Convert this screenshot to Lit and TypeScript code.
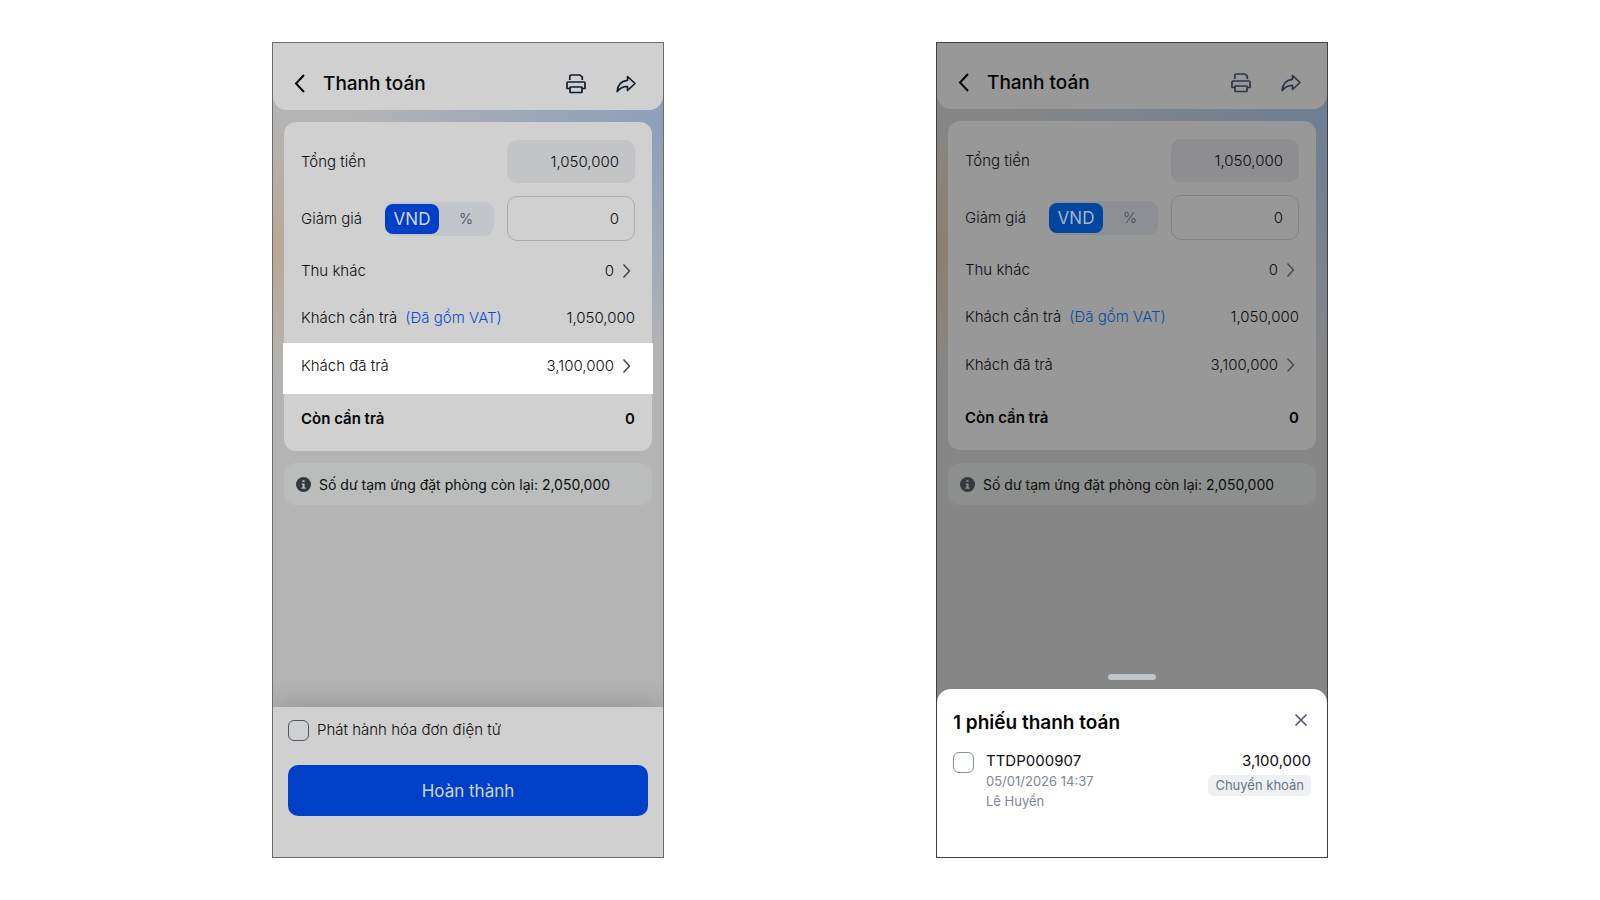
import { LitElement, html, css, svg } from "lit";
import { customElement, property } from "lit/decorators.js";

const backIcon = svg`<path d="M13 3 L5 11.500 L13 20" />`;
const chevronIcon = svg`<path d="M4.500 1.500 L10.500 8 L4.500 14.500" />`;

@customElement("payment-screen")
class PaymentScreen extends LitElement {
  @property({ type: Boolean, reflect: true }) sheet = false;

  static styles = css`
    :host {
      --surface: #d0d0d0;
      --back: #b4b4b4;
      --peach: #baa995;
      --sky: #8c9fbb;
      --field: #c2c4c6;
      --line: #a9adb4;
      --seg: #c2c5c9;
      --primary: #0040c8;
      --on-primary: #d0d6e4;
      --link: #0c4bd0;
      --note: #babdbc;
      --ink: #0c0d0e;
      --muted: #3c4658;
      --icon: #101c2e;
      --frame: #6c6c6c;
      display: flex;
      flex-direction: column;
      position: relative;
      overflow: hidden;
      box-sizing: border-box;
      border: 1px solid var(--frame);
      color: var(--ink);
      background:
        radial-gradient(ellipse 320px 240px at 100% 80px, var(--sky) 0, transparent 100%),
        radial-gradient(ellipse 200px 130px at 0 205px, var(--peach) 0, transparent 100%),
        var(--back);
    }
    :host([sheet]) {
      --surface: #989898;
      --back: #868686;
      --peach: #8c7f70;
      --sky: #6d7f94;
      --field: #8e8e90;
      --line: #7f8389;
      --seg: #8e8f92;
      --primary: #00469e;
      --on-primary: #a4b4c8;
      --link: #0a4c9c;
      --note: #8c8f8d;
      --muted: #454c58;
      --icon: #2c3644;
      --frame: #404040;
    }
    button, input { font: inherit; color: inherit; margin: 0; }
    button { border: 0; padding: 0; background: none; display: flex; align-items: center; }
    svg { display: block; fill: none; stroke: currentColor; stroke-width: 1.500; }
    h1, h2 { margin: 0; font-weight: 600; color: #050505; }
    h1 { font-size: 19px; line-height: 24px; font-weight: 500; flex: 1; }
    header {
      display: flex;
      align-items: center;
      height: 67px;
      box-sizing: border-box;
      padding: 14px 26px 0 18px;
      background: var(--surface);
      border-radius: 0 0 14px 14px;
    }
    :host([sheet]) header { height: 66px; padding: 13px 25px 0 18px; }
    .back { margin-right: 14px; color: #050505; }
    .back svg { stroke-width: 2; }
    .tool { margin-left: 28px; color: var(--icon); }
    .tool svg { stroke-width: 1.700; }
    .card {
      margin: 12px 11px 0;
      padding: 18px 17px 8px;
      background: var(--surface);
      border-radius: 12px;
    }
    .row {
      display: flex;
      align-items: center;
      height: 48px;
      font-size: 15px;
      font-weight: 300;
      line-height: 20px;
    }
    .row > :first-child { flex: 1; }
    .total-row { height: 43px; margin-bottom: 13px; }
    .discount-row { height: 45px; margin-bottom: 6px; }
    .due-row { height: 45px; margin-bottom: 3px; }
    .paid-row {
      height: 51px;
      box-sizing: border-box;
      margin: 0 -18px 1px;
      padding: 0 18px 6px;
    }
    :host(:not([sheet])) .paid-row { background: #fff; }
    .left-row { font-weight: 600; color: #050505; }
    .field {
      width: 128px;
      height: 100%;
      box-sizing: border-box;
      border: 1px solid var(--line);
      border-radius: 10px;
      padding: 0 15px;
      text-align: right;
      background: transparent;
    }
    .field:read-only { background: var(--field); border-color: var(--field); }
    .segment {
      display: flex;
      width: 109px;
      height: 34px;
      box-sizing: border-box;
      padding: 2px 0;
      margin-right: 13px;
      border-radius: 10px;
      background: var(--seg);
    }
    .segment button { justify-content: center; width: 54px; border-radius: 8px; color: var(--muted); }
    .segment .on { background: var(--primary); color: var(--on-primary); font-size: 17px; font-weight: 400; }
    .more { gap: 5px; padding-right: 2px; }
    .more svg { color: var(--muted); }
    .link { color: var(--link); text-decoration: none; margin-left: 4px; }
    .note {
      display: flex;
      align-items: center;
      gap: 8px;
      height: 42px;
      margin: 12px 11px 0;
      padding: 0 12px;
      border-radius: 12px;
      background: var(--note);
      font-size: 14px;
    }
    :host([sheet]) .note { margin-top: 13px; }
    .note svg { stroke: none; fill: #34393d; flex: none; }
    .note .glyph { fill: var(--note); }
    footer {
      margin-top: auto;
      height: 150px;
      box-sizing: border-box;
      padding: 12px 15px;
      background: var(--surface);
      box-shadow: 0 -6px 24px rgba(0, 0, 0, 0.16);
    }
    .check { display: flex; align-items: center; gap: 8px; font-size: 15px; font-weight: 300; line-height: 22px; }
    .box {
      appearance: none;
      flex: none;
      width: 21px;
      height: 21px;
      border: 1px solid #4c5869;
      border-radius: 6px;
    }
    .submit {
      width: 100%;
      height: 51px;
      margin-top: 24px;
      justify-content: center;
      border-radius: 10px;
      background: var(--primary);
      color: var(--on-primary);
      font-size: 17px;
    }
    .handle { width: 48px; height: 6px; border-radius: 3px; background: #c0c4cd; margin: auto auto 9px; }
    .sheet {
      height: 168px;
      box-sizing: border-box;
      padding: 20px 16px;
      border-radius: 14px 14px 0 0;
      background: #fff;
    }
    .sheet-head { display: flex; justify-content: space-between; height: 26px; }
    h2 { font-size: 19px; line-height: 28px; }
    .close { padding: 0 3px 4px 0; color: #465468; }
    .voucher { display: flex; margin-top: 16px; font-size: 15px; line-height: 20px; }
    .voucher .box { margin: 1px 12px 0 0; border-color: #8490a0; }
    .voucher label { flex: 1; }
    .meta { display: block; color: #7c8696; font-size: 13px; }
    .amount { display: flex; flex-direction: column; align-items: flex-end; gap: 4px; }
    .tag {
      padding: 0 7px;
      border-radius: 5px;
      background: #eff0f2;
      color: #67758a;
      font-size: 13px;
      line-height: 21px;
    }
  `;

  private chevron() {
    return html`<svg width="14" height="16" viewBox="0 0 14 16" aria-hidden="true">${chevronIcon}</svg>`;
  }

  render() {
    return html`
      <header>
        <button class="back" aria-label="Quay lại">
          <svg width="18" height="23" viewBox="0 0 18 23">${backIcon}</svg>
        </button>
        <h1>Thanh toán</h1>
        <button class="tool" aria-label="In">
          <svg width="22" height="22" viewBox="0 0 22 22" stroke-linejoin="round">
            <path d="M4.800 7 V3.500 Q4.800 2 6.300 2 H15 L17.300 4.200 V7" />
            <path d="M5 15.500 H2 V10 Q2 9 3 9 H19 Q20 9 20 10 V15.500 H17" />
            <rect x="5" y="14" width="12" height="5.500" rx="0.500" />
          </svg>
        </button>
        <button class="tool" aria-label="Chia sẻ">
          <svg width="22" height="22" viewBox="0 0 22 22" stroke-linejoin="round">
            <path d="M12.500 3.500 L20 10.500 L12.500 17.500 V13.500 C8 13.300 5 15 2.200 18.500 C2.500 12 6.500 7.800 12.500 7.300 Z" />
          </svg>
        </button>
      </header>
      <section class="card">
        <div class="row total-row">
          <label for="total">Tổng tiền</label>
          <input id="total" class="field" value="1,050,000" readonly />
        </div>
        <div class="row discount-row">
          <label for="discount">Giảm giá</label>
          <div class="segment">
            <button class="on" aria-pressed="true">VND</button>
            <button aria-pressed="false">%</button>
          </div>
          <input id="discount" class="field" value="0" />
        </div>
        <div class="row">
          <span>Thu khác</span>
          <button class="more">0 ${this.chevron()}</button>
        </div>
        <div class="row due-row">
          <span>Khách cần trả <a class="link" href="#vat">(Đã gồm VAT)</a></span>
          <span>1,050,000</span>
        </div>
        <div class="row paid-row">
          <span>Khách đã trả</span>
          <button class="more">3,100,000 ${this.chevron()}</button>
        </div>
        <div class="row left-row"><span>Còn cần trả</span><span>0</span></div>
      </section>
      <div class="note">
        <svg width="15" height="15" viewBox="0 0 14 14" aria-hidden="true">
          <circle cx="7" cy="7" r="7" />
          <path class="glyph" d="M6 3h2v1.700H6z M5.200 6H8v3.800h1v1.200H5v-1.200h1.100V7.100h-.9z" />
        </svg>
        <span>Số dư tạm ứng đặt phòng còn lại: 2,050,000</span>
      </div>
      ${this.sheet ? this.renderSheet() : this.renderFooter()}
    `;
  }

  private renderFooter() {
    return html`<footer>
      <label class="check"><input class="box" type="checkbox" />Phát hành hóa đơn điện tử</label>
      <button class="submit">Hoàn thành</button>
    </footer>`;
  }

  private renderSheet() {
    return html`
      <div class="handle"></div>
      <section class="sheet">
        <div class="sheet-head">
          <h2>1 phiếu thanh toán</h2>
          <button class="close" aria-label="Đóng">
            <svg width="14" height="14" viewBox="0 0 14 14"><path d="M1.500 1.500 L12.500 12.500 M12.500 1.500 L1.500 12.500" /></svg>
          </button>
        </div>
        <div class="voucher">
          <input class="box" type="checkbox" id="voucher" />
          <label for="voucher">
            TTDP000907
            <span class="meta">05/01/2026 14:37</span>
            <span class="meta">Lê Huyền</span>
          </label>
          <div class="amount"><span>3,100,000</span><span class="tag">Chuyển khoản</span></div>
        </div>
      </section>
    `;
  }
}

@customElement("app-root")
class AppRoot extends LitElement {
  static styles = css`
    :host {
      display: flex;
      justify-content: space-evenly;
      box-sizing: border-box;
      min-height: 100vh;
      padding: 42px 0;
      background: #fff;
      font-family: Inter, "Noto Sans", sans-serif;
    }
    payment-screen { width: 24.5%; min-width: 360px; }
  `;

  render() {
    return html`<payment-screen></payment-screen><payment-screen sheet></payment-screen>`;
  }
}
